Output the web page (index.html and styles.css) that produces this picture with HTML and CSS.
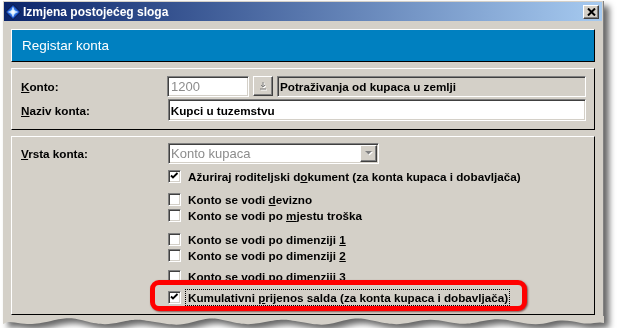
FILE: index.html
```html
<!DOCTYPE html>
<html lang="hr">
<head>
    <meta charset="UTF-8">
    <title>Izmjena postojećeg sloga</title>
    <link rel="stylesheet" href="styles.css">
</head>
<body>
    <div class="shot">
        <div class="window">
            <div class="titlebar">
                <svg class="app-icon" width="16" height="16" viewBox="0 0 16 16">
                    <polygon points="8,0.5 15.5,8 8,15.5 0.5,8" fill="#1d55c8" stroke="#06143f"/>
                    <polygon points="8,3 13,8 8,13 3,8" fill="#3c86ee"/>
                    <circle cx="8" cy="8" r="2.6" fill="#bfe4ff"/>
                    <path d="M8 3.5v9M3.5 8h9" stroke="#fff" stroke-width="1.2"/>
                </svg>
                <span class="title">Izmjena postojećeg sloga</span>
                <span class="close-btn">
                    <svg width="9" height="8" viewBox="0 0 9 8"><path d="M1 0.5l7 7M8 0.5l-7 7" stroke="#000" stroke-width="2"/></svg>
                </span>
            </div>

            <div class="content">
                <div class="banner">Registar konta</div>

                <div class="panel panel-top">
                    <div class="row row-first">
                        <label class="lbl"><u>K</u>onto:</label>
                        <div class="field">
                            <span class="edit edit-code">1200</span>
                            <span class="btn lookup">
                                <svg width="9" height="9" viewBox="0 0 9 9">
                                    <path d="M5 1v4M3 4l2 2 2-2M2 8h6" stroke="#fff" fill="none"/>
                                    <path d="M4 0v4M2 3l2 2 2-2M1 7h6" stroke="#808080" fill="none"/>
                                </svg>
                            </span>
                            <span class="edit edit-desc">Potraživanja od kupaca u zemlji</span>
                        </div>
                    </div>
                    <div class="row row-second">
                        <label class="lbl"><u>N</u>aziv konta:</label>
                        <span class="edit edit-name">Kupci u tuzemstvu</span>
                    </div>
                </div>

                <div class="panel panel-bottom">
                    <div class="row row-combo">
                        <label class="lbl"><u>V</u>rsta konta:</label>
                        <div class="combo">
                            <span class="combo-text">Konto kupaca</span>
                            <span class="btn combo-btn">
                                <svg width="8" height="5" viewBox="0 0 8 5">
                                    <path d="M1 1h7l-3.5 3.5z" fill="#fff"/>
                                    <path d="M0 0h7l-3.5 3.5z" fill="#808080"/>
                                </svg>
                            </span>
                        </div>
                    </div>

                    <div class="checks">
                        <div class="check c1">
                            <span class="box"><svg width="9" height="9" viewBox="0 0 9 9"><path d="M1 3.5l2 2 4.5-4.5" stroke="#000" stroke-width="1.8" fill="none"/></svg></span>
                            <span class="check-text">Ažuriraj roditeljski d<u>o</u>kument (za konta kupaca i dobavljača)</span>
                        </div>
                        <div class="check c2">
                            <span class="box"></span>
                            <span class="check-text">Konto se vodi <u>d</u>evizno</span>
                        </div>
                        <div class="check c3">
                            <span class="box"></span>
                            <span class="check-text">Konto se vodi po <u>m</u>jestu troška</span>
                        </div>
                        <div class="check c4">
                            <span class="box"></span>
                            <span class="check-text">Konto se vodi po dimenziji <u>1</u></span>
                        </div>
                        <div class="check c5">
                            <span class="box"></span>
                            <span class="check-text">Konto se vodi po dimenziji <u>2</u></span>
                        </div>
                        <div class="check c6">
                            <span class="box"></span>
                            <span class="check-text">Konto se vodi po dimenziji <u>3</u></span>
                        </div>
                        <div class="highlight">
                            <div class="check c7">
                                <span class="box"><svg width="9" height="9" viewBox="0 0 9 9"><path d="M1 3.5l2 2 4.5-4.5" stroke="#000" stroke-width="1.8" fill="none"/></svg></span>
                                <span class="check-text focus">Kumulativni <u>p</u>rijenos salda (za konta kupaca i dobavljača)</span>
                            </div>
                        </div>
                    </div>
                </div>
            </div>
        </div>
        <svg class="torn" width="601" height="12" viewBox="0 0 601 12">
            <path d="M0 0H601V7C595 5 588 9 578 7S560 3 548 6S530 9 515 6S495 2 480 5S460 9 445 6S425 3 410 6S390 9 372 5S350 2 335 6S315 9 298 6S278 3 262 6S242 9 225 5S205 2 190 6S170 9 152 6S132 3 118 6S98 9 82 5S62 2 48 5S28 9 15 7S5 6 0 8Z" fill="#d4d0c8"/>
        </svg>
    </div>
</body>
</html>
```

FILE: styles.css
```css
body { margin: 0; background: #fff; font-family: "Liberation Sans", Arial, sans-serif; }
.shot { width: 601px; margin: 1px 0 0 3px; filter: drop-shadow(5px 5px 3px rgba(0,0,0,0.6)); }
.window { background: #d4d0c8; padding: 1px; border-right: 1px solid #808080; }
.torn { display: block; margin-top: -1px; }

/* title bar */
.titlebar { height: 19px; display: flex; align-items: center; background: linear-gradient(to right, #0a246a, #a6caf0); }
.app-icon { margin-left: 1px; }
.title { margin-left: 2px; color: #fff; font-weight: bold; font-size: 12px; }
.close-btn { margin-left: auto; margin-right: 3px; width: 16px; height: 14px; box-sizing: border-box; display: flex; align-items: center; justify-content: center; background: #d4d0c8; border: 1px solid; border-color: #fff #404040 #404040 #fff; box-shadow: inset -1px -1px 0 #808080; }

.content { padding: 8px 7px 1px 7px; }

.banner { height: 33px; box-sizing: border-box; display: flex; align-items: center; padding: 0 0 1px 10px; background: #0080c0; color: #fff; font-size: 13.5px; border: 1px solid; border-color: #fff #000 #000 #fff; }

.panel { margin-top: 6px; border: 1px solid; border-color: #fff #000 #000 #fff; padding: 0 8px 0 9px; }
.panel-top { padding-top: 7px; padding-bottom: 8px; }
.panel-bottom { padding-top: 6px; padding-bottom: 3px; }

.row { display: flex; align-items: center; }
.row-first { height: 21px; }
.row-second { height: 22px; margin-top: 2px; }
.lbl { width: 147px; font-weight: bold; font-size: 11.7px; color: #000; }

.field { display: flex; gap: 4px; }
.edit { height: 21px; box-sizing: border-box; display: flex; align-items: center; padding-left: 2px; background: #fff; border: 1px solid; border-color: #808080 #fff #fff #808080; box-shadow: inset 1px 1px 0 #404040, inset -1px -1px 0 #d4d0c8; font-weight: bold; font-size: 11.7px; }
.edit-code { width: 82px; font-weight: normal; font-size: 13px; color: #8c8c8c; padding-left: 3px; }
.edit-desc { width: 309px; background: #d4d0c8; }
.edit-name { width: 419px; height: 22px; }

.btn { box-sizing: border-box; display: flex; align-items: center; justify-content: center; background: #d4d0c8; border: 1px solid; border-color: #fff #404040 #404040 #fff; box-shadow: inset -1px -1px 0 #808080; }
.lookup { width: 20px; height: 20px; }

.row-combo { height: 21px; }
.combo { width: 211px; height: 21px; box-sizing: border-box; display: flex; align-items: center; justify-content: space-between; padding: 1px; background: #fff; border: 1px solid; border-color: #808080 #fff #fff #808080; box-shadow: inset 1px 1px 0 #404040, inset -1px -1px 0 #d4d0c8; }
.combo-text { padding-left: 1px; font-size: 13px; color: #8c8c8c; }
.combo-btn { width: 17px; height: 17px; }

/* checkboxes */
.checks { margin-left: 147px; }
.check { height: 16px; display: flex; align-items: center; font-weight: bold; font-size: 11.7px; color: #000; }
.check-text { margin-left: 7px; white-space: nowrap; }
.box { width: 13px; height: 13px; flex: none; box-sizing: border-box; display: flex; align-items: center; justify-content: center; background: #fff; border: 1px solid; border-color: #808080 #fff #fff #808080; box-shadow: inset 1px 1px 0 #404040, inset -1px -1px 0 #d4d0c8; }
.c1 { margin-top: 4px; }
.c2 { margin-top: 7px; }
.c3 { margin-top: 0; }
.c4 { margin-top: 8px; }
.c5 { margin-top: 0; }
.c6 { margin-top: 5px; }

.highlight { position: relative; width: 377px; height: 31px; box-sizing: border-box; margin: -4px 0 0 -18px; padding: 4px 0 0 13px; background: #d4d0c8; border: 5px solid #ff0000; border-radius: 9px; box-shadow: 1px 1px 2px rgba(80,0,0,0.6); }
.c7 { height: 17px; }
.focus { margin-left: 4px; padding: 1px 1px 1px 2px; border: 1px dotted #000; }
```
